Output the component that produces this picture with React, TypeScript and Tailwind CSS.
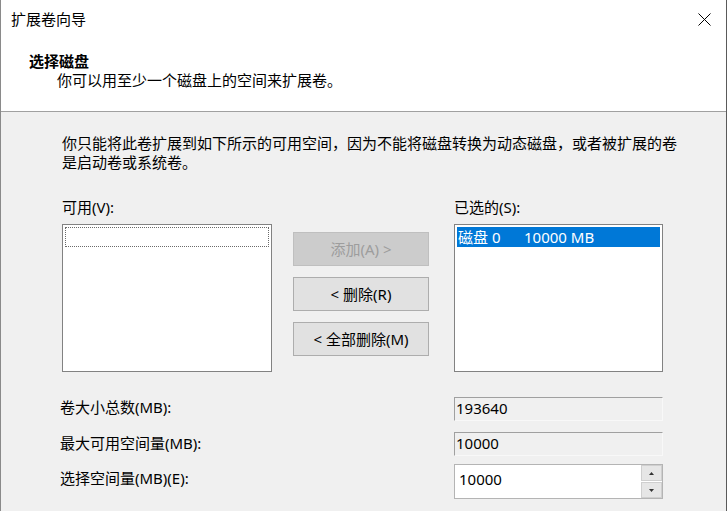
import React from "react";

const font = { fontFamily: '"Noto Sans", "Noto Sans CJK SC", sans-serif' };

function CloseIcon() {
  return (
    <svg width="13" height="13" viewBox="0 0 13 13" className="block">
      <path d="M0.5 0.5 L12.5 12.5 M12.5 0.5 L0.5 12.5" stroke="#000" strokeWidth="1" />
    </svg>
  );
}

function ListBox({ children }: { children?: React.ReactNode }) {
  return (
    <div className="mt-[7px] h-[148px] w-full border border-[#828282] bg-white p-[2px]">
      {children}
    </div>
  );
}

function ActionButton({ label, disabled }: { label: string; disabled?: boolean }) {
  return (
    <div
      className={
        disabled
          ? "flex h-[34px] w-[136px] items-center justify-center border border-[#bfbfbf] bg-[#cccccc] text-[#9d9d9d]"
          : "flex h-[34px] w-[136px] items-center justify-center border border-[#adadad] bg-[#e1e1e1] text-black"
      }
    >
      {label}
    </div>
  );
}

function ReadOnlyField({ value }: { value: string }) {
  return (
    <div className="flex h-[24px] w-[209px] items-center border-t border-l border-t-[#a0a0a0] border-l-[#a0a0a0] border-b border-r border-b-[#f8f8f8] border-r-[#f8f8f8] bg-[#f0f0f0] pb-[2px] pl-[1px]">
      {value}
    </div>
  );
}

function SpinBox({ value }: { value: string }) {
  return (
    <div className="flex h-[35px] w-[209px] border border-[#b4b4b4] bg-white">
      <div className="flex flex-1 items-center pb-[5px] pl-[4px]">{value}</div>
      <div className="flex w-[21px] flex-col gap-px bg-white">
        <div className="flex flex-1 items-center justify-center border border-[#cfcfcf] bg-[#e6e6e6]">
          <svg width="5" height="3" viewBox="0 0 5 3">
            <path d="M2.5 0 L5 3 L0 3 Z" fill="#333" />
          </svg>
        </div>
        <div className="flex flex-1 items-center justify-center border border-[#cfcfcf] bg-[#e6e6e6]">
          <svg width="5" height="3" viewBox="0 0 5 3">
            <path d="M0 0 L5 0 L2.5 3 Z" fill="#333" />
          </svg>
        </div>
      </div>
    </div>
  );
}

export default function App() {
  return (
    <div
      style={font}
      className="h-[511px] w-[727px] overflow-hidden border-l border-r border-l-[#8a8a8a] border-r-[#5a5a5a] bg-[#f0f0f0] text-[15px] leading-[19px] text-black"
    >
      <div className="h-[112px] border-b border-[#a0a0a0] bg-white">
        <div className="flex h-[38px] items-center justify-between pl-[10px] pr-[15px]">
          <span>扩展卷向导</span>
          <CloseIcon />
        </div>
        <div className="mt-[14px] pl-[28px] font-bold">选择磁盘</div>
        <div className="pl-[56px]">你可以用至少一个磁盘上的空间来扩展卷。</div>
      </div>

      <div className="pl-[61px] pt-[22px]">
        <p>
          你只能将此卷扩展到如下所示的可用空间，因为不能将磁盘转换为动态磁盘，或者被扩展的卷
          <br />
          是启动卷或系统卷。
        </p>

        <div className="mt-[26px] flex">
          <div className="w-[210px]">
            <div>可用(V):</div>
            <ListBox>
              <div className="h-[20px] border border-dotted border-[#6a6a6a]" />
            </ListBox>
          </div>

          <div className="ml-[21px] mt-[34px] flex flex-col gap-[11px]">
            <ActionButton label="添加(A) >" disabled />
            <ActionButton label="< 删除(R)" />
            <ActionButton label="< 全部删除(M)" />
          </div>

          <div className="ml-[25px] w-[209px]">
            <div>已选的(S):</div>
            <ListBox>
              <div className="flex h-[20px] items-center bg-[#0078d7] pl-[1px] text-white">
                <span className="w-[66px]">磁盘 0</span>
                <span>10000 MB</span>
              </div>
            </ListBox>
          </div>
        </div>

        <div className="mt-[25px] flex flex-col">
          <div className="flex items-center">
            <span className="-ml-[2px] w-[394px] -translate-y-[2px]">卷大小总数(MB):</span>
            <ReadOnlyField value="193640" />
          </div>
          <div className="mt-[11px] flex items-center">
            <span className="-ml-[2px] w-[394px] -translate-y-[1px]">最大可用空间量(MB):</span>
            <ReadOnlyField value="10000" />
          </div>
          <div className="mt-[8px] flex items-center">
            <span className="-ml-[2px] w-[394px] -translate-y-[3px]">选择空间量(MB)(E):</span>
            <SpinBox value="10000" />
          </div>
        </div>
      </div>
    </div>
  );
}
